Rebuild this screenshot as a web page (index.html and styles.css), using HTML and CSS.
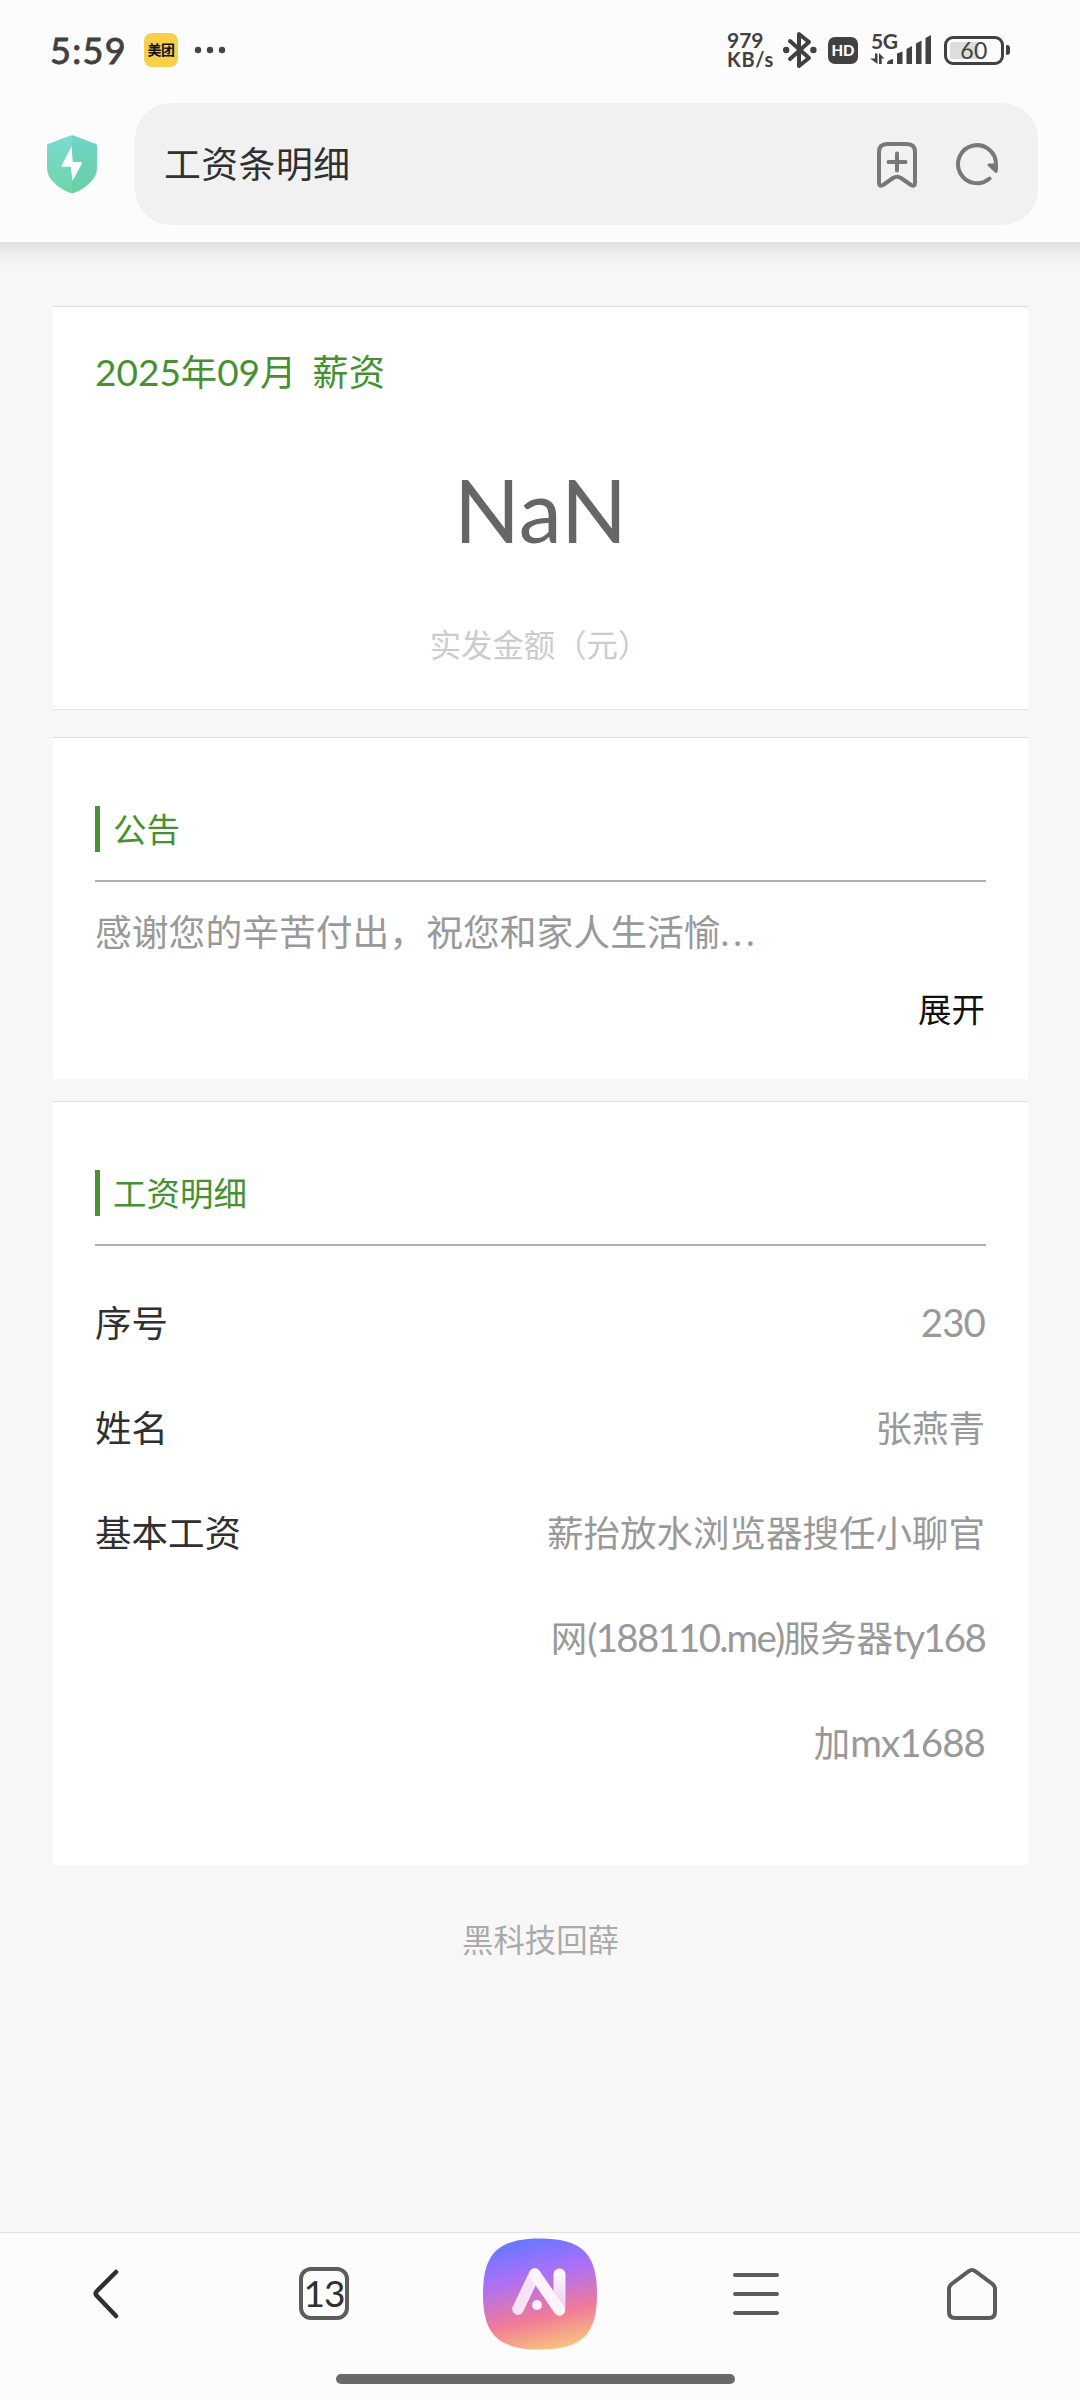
FILE: index.html
```html
<!DOCTYPE html>
<html lang="zh-CN">
<head>
<meta charset="utf-8">
<title>工资条明细</title>
<link rel="stylesheet" href="styles.css">
</head>
<body>
<div class="screen">
  <header class="top">
    <div class="status">
      <span class="clock">5:59</span>
      <span class="app-badge">美团</span>
      <svg class="dots" width="32" height="8" viewBox="0 0 32 8" fill="#444"><circle cx="4" cy="4" r="3.2"/><circle cx="16" cy="4" r="3.2"/><circle cx="28" cy="4" r="3.2"/></svg>
      <div class="speed"><span class="rate">979</span><span class="unit">KB/s</span></div>
      <svg class="bluetooth" width="34" height="38" viewBox="0 0 34 38" fill="none" stroke="#414141" stroke-width="4" stroke-linejoin="round" stroke-linecap="round"><path d="M7 10 26 27 16 35V3l10 8L7 28"/><g fill="#414141" stroke="none"><circle cx="3.2" cy="19" r="3.2"/><circle cx="30.4" cy="19" r="3.2"/></g></svg>
      <span class="hd">HD</span>
      <div class="signal">
        <span class="net">5G</span>
        <svg width="62" height="30" viewBox="0 0 62 30" fill="#414141"><path d="M5 18.500h2.500V29L0 23.500h5zM9 29V18l5.500 5.500h-2.800V29z"/><path d="M17 29q0-2 1-3l4-2q1-.5 1 1v4zM27 18.500l5.500-2V29H27zM36.500 14l5.500-3v18h-5.500zM46 8.500l5.500-3V29H46zM55.500 3 61 0v29h-5.500z"/></svg>
      </div>
      <div class="battery"><span class="level">60</span></div>
      <i class="nub"></i>
    </div>
    <div class="address">
      <svg class="shield" width="52" height="59" viewBox="0 0 52 59"><defs><linearGradient id="sh" x2="0" y2="1"><stop stop-color="#7adad0"/><stop offset="1" stop-color="#72d5a6"/></linearGradient></defs><path fill="url(#sh)" d="M24 .7q2-1 4 0l21.500 8q1.500.6 1.500 2.300v22q0 7-5 12.500-7 8.500-18 12.300-2 .7-4 0-11-4-18-12.300-5-5.500-5-12.500V11q0-1.700 1.500-2.300z"/><path d="M26 0q1 0 2 .7l21.500 8q1.500.6 1.500 2.300v22q0 7-5 12.500-7 8.500-18 12.300-1 .4-2 .4z" fill="#2fb79a" opacity=".15"/><path d="M25.500 11.500 15.500 30.500q-.5 1.200 1 1.200h8.300L26.500 46l9.500-17.500q.6-1.500-1-1.500h-8.200z" fill="#fff"/></svg>
      <div class="search">
        <span class="page-title">工资条明细</span>
        <svg width="42" height="48" viewBox="0 0 42 48" fill="none" stroke="#787878" stroke-width="4" stroke-linecap="round" stroke-linejoin="round"><path d="M3 43V12Q3 4 11 4h20q8 0 8 8v31q0 4-4 2l-10-7q-4-2.500-8 0L7 45q-4 2-4-2zM21 13.500v17M12.500 22h17"/></svg>
        <svg width="44" height="44" viewBox="0 0 44 44" fill="none" stroke="#787878" stroke-width="4" stroke-linecap="round"><path d="M34.500 36.500A19 19 0 1 1 41 22v5"/><path d="m34 23 7 6.500V23z" stroke-width="3" stroke-linejoin="round" fill="#787878"/></svg>
      </div>
    </div>
  </header>

  <main class="content">
    <section class="card summary">
      <div class="month"><b>2025</b>年<b>09</b>月<b class="gap"> </b>薪资</div>
      <div class="amount">NaN</div>
      <div class="caption">实发金额（元）</div>
    </section>
    <section class="card notice">
      <h2 class="heading">公告</h2>
      <p class="message">感谢您的辛苦付出，祝您和家人生活愉<span class="ellipsis">...</span></p>
      <a class="expand">展开</a>
    </section>
    <section class="card details">
      <h2 class="heading">工资明细</h2>
      <dl class="rows">
        <div class="row"><dt>序号</dt><dd><b>230</b></dd></div>
        <div class="row"><dt>姓名</dt><dd>张燕青</dd></div>
        <div class="row"><dt>基本工资</dt><dd>薪抬放水浏览器搜任小聊官<br>网<b class="tight">(188110.me)</b>服务器<b class="tight">ty168</b><br>加<b>mx1688</b></dd></div>
      </dl>
    </section>
    <footer class="credit">黑科技回薛</footer>
  </main>

  <nav class="bottom">
    <div class="tabs">
      <div class="tab back"><svg width="26" height="50" viewBox="0 0 26 50" fill="none" stroke="#303030" stroke-width="4.500" stroke-linecap="round" stroke-linejoin="round"><path d="M23 3 4 22q-2.500 2.500 0 5l19 20"/></svg></div>
      <div class="tab"><span class="count">13</span></div>
      <div class="tab"><svg class="ai" width="114" height="112" viewBox="0 0 114 112"><defs><linearGradient id="bg" x1=".38" y1="0" x2=".62" y2="1"><stop stop-color="#6678ff"/><stop offset=".32" stop-color="#aa70f8"/><stop offset=".7" stop-color="#f07a98"/><stop offset="1" stop-color="#f8c37c"/></linearGradient><linearGradient id="leg" x2="0" y2="1"><stop stop-color="#fff"/><stop offset="1" stop-color="#f3d4ef"/></linearGradient><linearGradient id="stem" x2="0" y2="1"><stop stop-color="#fff"/><stop offset="1" stop-color="#efc5ee"/></linearGradient></defs><path fill="url(#bg)" d="M57 .5c42 0 57 15 57 55.500S99 111.500 57 111.500 0 96.500 0 56 15 .5 57 .5z"/><path d="M51.500 36.500 35 71" fill="none" stroke="#f8e2f6" stroke-width="11.500" stroke-linecap="round"/><rect x="70.500" y="30.500" width="12" height="43" rx="6" fill="url(#stem)"/><path d="m51.800 36 24.700 36" fill="none" stroke="#fdf3fb" stroke-width="11.500" stroke-linecap="round"/><circle cx="54" cy="67" r="5" fill="#fff0f8"/></svg></div>
      <div class="tab"><svg width="46" height="44" viewBox="0 0 46 44" stroke="#5c5c5c" stroke-width="4" stroke-linecap="round"><path d="M2 3h42M2 22h42M2 41h42"/></svg></div>
      <div class="tab"><svg width="52" height="54" viewBox="0 0 52 54" fill="none" stroke="#5c5c5c" stroke-width="4" stroke-linejoin="round"><path d="M3 22q0-3 2.500-5L22.500 4.300q3.500-2.500 7 0L46.500 17q2.500 2 2.500 5v23q0 6-6 6H9q-6 0-6-6z"/></svg></div>
    </div>
    <div class="handle"></div>
  </nav>
</div>
</body>
</html>
```
FILE: styles.css
```css
* { box-sizing: border-box; }
body { margin: 0; background: #f7f7f7; }
svg { display: block; flex: none; }
b { font-weight: 400; }

.screen {
  width: 1080px; height: 2400px;
  display: flex; flex-direction: column;
  background: #f7f7f7;
  font-family: Lato, "Noto Sans CJK SC", sans-serif;
  color: #333;
  overflow: hidden;
}

/* status bar and address bar */
.top { height: 242px; flex: none; background: #fcfcfc; }
.status { height: 103px; padding: 0 70px 3px 50px; display: flex; align-items: center; color: #414141; }
.clock { width: 94px; font-size: 36px; font-weight: 400; line-height: 40px; letter-spacing: 1.300px; -webkit-text-stroke: .9px #414141; }
.app-badge {
  width: 34px; height: 34px; border-radius: 8px; background: #f6d04a;
  color: #111; font: 700 14px/33px "Noto Sans CJK SC", sans-serif; text-align: center; letter-spacing: -.5px;
}
.dots { margin-left: 16px; }
.speed { width: 56px; height: 38px; margin-left: auto; display: flex; flex-direction: column; justify-content: space-between; font-weight: 700; }
.rate { font-size: 21px; line-height: 18px; }
.unit { font-size: 20px; line-height: 20px; letter-spacing: .7px; }
.hd {
  width: 30px; height: 27px; margin-left: 11px; border-radius: 7px;
  background: #414141; color: #fff; font: 900 15px/27px Lato, sans-serif; text-align: center;
}
.signal { position: relative; width: 62px; height: 30px; margin-left: 12px; }
.net { position: absolute; left: 1px; top: -4px; font-size: 21px; font-weight: 700; line-height: 20px; letter-spacing: -.5px; }
.battery {
  width: 60px; height: 29px; margin-left: 12px; border: 3px solid #414141; border-radius: 9px;
  background: linear-gradient(90deg, #ddd 60%, #fcfcfc 60%) content-box; padding: 3px;
}
.level { display: block; font-size: 23px; line-height: 17px; text-align: center; letter-spacing: .5px; }
.nub { width: 4px; height: 10px; margin-left: 2px; border-radius: 1px 3px 3px 1px; background: #414141; }

.address { display: flex; align-items: center; padding: 0 42px 0 46px; }
.search {
  flex: 1; height: 122px; margin-left: 37px; padding: 0 39px 0 29px; border-radius: 36px;
  display: flex; align-items: center; background: #f1f1f1;
}
.page-title { flex: 1; padding-bottom: 1px; font-size: 36.800px; line-height: 50px; letter-spacing: .5px; color: #303030; }
.search svg + svg { margin-left: 37px; }

/* page content */
.content {
  flex: 1; padding: 64px 52px 0 53px; text-align: center;
  background: linear-gradient(#e0e0e0, #ededed 12px, #f7f7f7 26px);
}
.card { background: #fff; border-top: 1px solid #dedede; text-align: left; }
.summary { height: 404px; padding: 39px 42px 0; border-bottom: 1px solid #e6e6e6; }
.month { font-size: 36.300px; line-height: 52px; color: #459130; }
.month b { font-size: 37px; }
.month .gap { display: inline-block; width: 16px; }
.amount { margin-top: 62px; font-size: 86.500px; line-height: 100px; color: #666; text-align: center; }
.caption { margin-top: 63px; padding-right: 2px; font-size: 31.400px; line-height: 44px; color: #ccc; text-align: center; }
.notice { height: 342px; margin-top: 27px; padding: 68px 42px 0; display: flex; flex-direction: column; }
.heading {
  margin: 0; padding-bottom: 28px; border-bottom: 2px solid #b0b0b0;
  display: flex; align-items: center; gap: 13px;
  font-size: 33.500px; font-weight: 400; line-height: 44px; color: #459130;
}
.heading::before { content: ""; width: 5px; height: 46px; background: #4a9133; }
.message { margin: 24px 0 0; font-size: 36.800px; line-height: 52px; color: #999; white-space: nowrap; }
.ellipsis { letter-spacing: 4px; }
.expand { align-self: flex-end; margin: 27px 1px 0 0; font-size: 33.500px; line-height: 48px; color: #111; }
.details { height: 764px; margin-top: 22px; padding: 68px 42px 0; }
.rows { margin: 25px 0 0; }
.row { display: flex; justify-content: space-between; font-size: 36.500px; line-height: 105px; }
.row dt { color: #303030; }
.row dd { margin: 0 1px 0 0; width: 450px; text-align: right; white-space: nowrap; color: #999; }
.row b { font-size: 38.500px; line-height: 1; letter-spacing: -.9px; }
.row .tight { letter-spacing: -1.750px; }
.credit { margin-top: 53px; font-size: 31.400px; line-height: 44px; color: #aaa; }

/* browser toolbar */
.bottom { height: 168px; flex: none; background: #fcfcfc; border-top: 1px solid #e2e2e2; }
.tabs { height: 121px; display: grid; grid-template-columns: repeat(5, 1fr); }
.tab { display: flex; align-items: center; justify-content: center; }
.back { padding-right: 4px; }
.count {
  width: 50px; height: 53px; border: 4px solid #5c5c5c; border-radius: 12px;
  font: 37px/44px Lato, sans-serif; letter-spacing: -1px; color: #303030; text-align: center;
}
.handle { width: 399px; height: 10px; margin: 20px 0 0 336px; border-radius: 5px; background: #696969; }
```
